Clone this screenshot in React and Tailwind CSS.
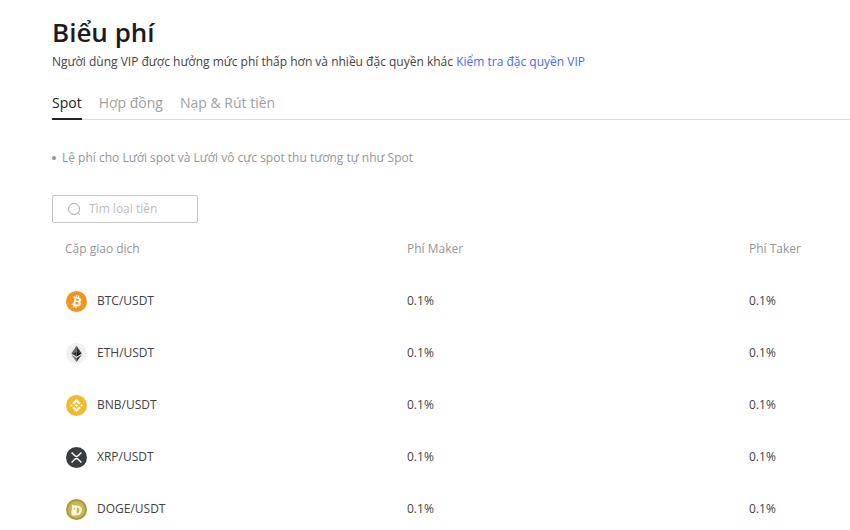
import React from "react";

const tabs = ["Spot", "Hợp đồng", "Nạp & Rút tiền"];

function BtcIcon() {
    return (
        <svg viewBox="0 0 32 32" className="size-[21px]" aria-hidden="true">
            <circle cx="16" cy="16" r="16" fill="#f7931a" />
            <path
                fill="#fff"
                d="M23.2 14c.3-2.1-1.3-3.2-3.5-4l.7-2.8-1.7-.4-.7 2.7-1.4-.3.7-2.7-1.7-.5-.7 2.9-3.5-.9-.5 1.9s1.3.3 1.2.3c.7.2.8.6.8 1l-1.9 7.7c-.1.2-.3.5-.8.4l-1.2-.3-.9 2 3.5.9-.7 2.8 1.7.4.7-2.8 1.4.4-.7 2.8 1.7.4.7-2.8c2.9.5 5.1.3 6-2.3.8-2.1 0-3.4-1.5-4.2 1.1-.3 2-1 2.3-2.6zm-4 5.5c-.5 2.1-4.1 1-5.2.7l.9-3.8c1.2.3 4.9.9 4.3 3.1zm.5-5.6c-.5 1.9-3.4.9-4.4.7l.8-3.4c1 .2 4.1.7 3.6 2.7z"
            />
        </svg>
    );
}

function EthIcon() {
    return (
        <svg viewBox="0 0 32 32" className="size-[21px]" aria-hidden="true">
            <circle cx="16" cy="16" r="16" fill="#f0f0f0" />
            <path d="M16 4v9l-8 3z" fill="#666" />
            <path d="M16 4v9l8 3z" fill="#333" />
            <path d="M8 16l8-3v8z" fill="#3c3c3c" />
            <path d="M24 16l-8-3v8z" fill="#181818" />
            <path d="M8 18l8 5v6z" fill="#777" />
            <path d="M24 18l-8 5v6z" fill="#333" />
        </svg>
    );
}

function BnbIcon() {
    return (
        <svg viewBox="0 0 32 32" className="size-[21px]" aria-hidden="true">
            <circle cx="16" cy="16" r="16" fill="#f3ba2f" />
            <path
                fill="#fff"
                d="M12.1 14.4L16 10.5l3.9 3.9 2.3-2.3L16 6l-6.2 6.2zM6 16l2.3-2.3 2.2 2.3-2.2 2.3zM12.1 17.6L16 21.5l3.9-3.9 2.3 2.3L16 26l-6.2-6.2zM21.5 16l2.2-2.3L26 16l-2.3 2.3zM18.3 16L16 18.3 13.7 16l2.3-2.3z"
            />
        </svg>
    );
}

function XrpIcon() {
    return (
        <svg viewBox="0 0 32 32" className="size-[21px]" aria-hidden="true">
            <circle cx="16" cy="16" r="16" fill="#3a3d3f" />
            <path
                fill="none"
                stroke="#fff"
                strokeWidth="2.2"
                d="M8.5 8.5l4.6 4.5q2.9 2.8 5.8 0l4.6-4.5M8.5 23.5l4.6-4.5q2.9-2.8 5.8 0l4.6 4.5"
            />
        </svg>
    );
}

function DogeIcon() {
    return (
        <svg viewBox="0 0 32 32" className="size-[21px]" aria-hidden="true">
            <circle cx="16" cy="16" r="16" fill="#ab983a" />
            <circle cx="16" cy="16" r="13" fill="#c9b650" />
            <path
                fill="#faf6e0"
                d="M9 8l3 2h6c5 1 7 4 6 8-1 5-4 7-8 7H9c-1-3-1-6 0-9z"
            />
            <path fill="#c3b05a" d="M12 14l2-1v3h-2zM17 13c3 1 4 3 3 6-1 2-2 3-4 3z" />
        </svg>
    );
}

const pairs = [
    { name: "BTC/USDT", Icon: BtcIcon, maker: "0.1%", taker: "0.1%" },
    { name: "ETH/USDT", Icon: EthIcon, maker: "0.1%", taker: "0.1%" },
    { name: "BNB/USDT", Icon: BnbIcon, maker: "0.1%", taker: "0.1%" },
    { name: "XRP/USDT", Icon: XrpIcon, maker: "0.1%", taker: "0.1%" },
    { name: "DOGE/USDT", Icon: DogeIcon, maker: "0.1%", taker: "0.1%" },
];

function App() {
    return (
        <main className="bg-white pl-[52px] pt-3 font-['Open_Sans',sans-serif] text-xs leading-5 text-[#424242]">
            <h1 className="text-[26px] font-semibold leading-10 text-[#1c1c1c]">
                Biểu phí
            </h1>
            <p>
                Người dùng VIP được hưởng mức phí thấp hơn và nhiều đặc quyền khác{" "}
                <a href="#vip" className="text-[#4a69ea]">
                    Kiểm tra đặc quyền VIP
                </a>
            </p>

            <nav className="mt-[21px] flex gap-[17px] border-b border-[#dcdcdc] text-sm">
                {tabs.map((tab, i) => (
                    <button
                        key={tab}
                        type="button"
                        className={
                            i === 0
                                ? "-mb-px border-b-2 border-[#222] pb-[5px] font-medium text-[#222]"
                                : "-mb-px border-b-2 border-transparent pb-[5px] text-[#a0a0a0]"
                        }
                    >
                        {tab}
                    </button>
                ))}
            </nav>

            <ul className="mt-7 text-[#959595]">
                <li className="flex items-center gap-1.5">
                    <span className="size-1 rounded-full bg-[#959595]" />
                    Lệ phí cho Lưới spot và Lưới vô cực spot thu tương tự như Spot
                </li>
            </ul>

            <label className="mt-[27px] flex h-7 w-[146px] items-center gap-2 rounded-xs border border-[#c4c4c4] px-3.5">
                <svg
                    viewBox="0 0 14 14"
                    className="size-3.5 shrink-0"
                    fill="none"
                    stroke="#a8a8a8"
                    aria-hidden="true"
                >
                    <circle cx="7" cy="7" r="5.5" />
                    <path d="M10.8 10.8l2 2" />
                </svg>
                <input
                    type="text"
                    aria-label="Tìm loại tiền"
                    placeholder="Tìm loại tiền"
                    className="w-full min-w-0 outline-none placeholder:text-[#bcbcbc]"
                />
            </label>

            <table className="w-full table-fixed text-left">
                <thead>
                    <tr className="h-13 text-[#959595]">
                        <th className="w-3/7 pl-[13px] font-normal">Cặp giao dịch</th>
                        <th className="w-3/7 pl-[13px] font-normal">Phí Maker</th>
                        <th className="pl-[13px] font-normal">Phí Taker</th>
                    </tr>
                </thead>
                <tbody>
                    {pairs.map(({ name, Icon, maker, taker }) => (
                        <tr key={name} className="h-13">
                            <td className="pl-3.5">
                                <div className="flex items-center gap-2.5">
                                    <Icon />
                                    {name}
                                </div>
                            </td>
                            <td className="pl-[13px]">{maker}</td>
                            <td className="pl-[13px]">{taker}</td>
                        </tr>
                    ))}
                </tbody>
            </table>
        </main>
    );
}

export default App;
